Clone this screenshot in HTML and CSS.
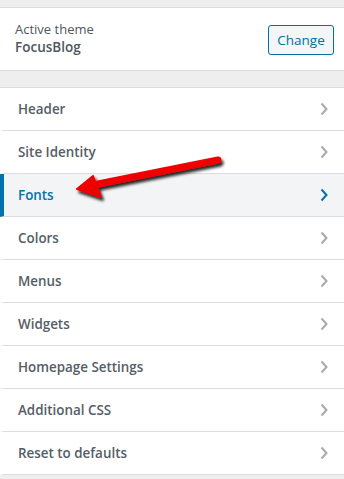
FILE: index.html
```html
<!DOCTYPE html>
<html lang="en">
<head>
    <meta charset="UTF-8">
    <meta name="viewport" content="width=device-width, initial-scale=1.0">
    <title>Customizer</title>
    <link rel="stylesheet" href="styles.css">
</head>
<body>
    <div class="panel">
        <div class="theme-box">
            <div class="theme-info">
                <span class="theme-label">Active theme</span>
                <span class="theme-name">FocusBlog</span>
            </div>
            <button class="change-btn">Change</button>
        </div>

        <ul class="sections">
            <li class="section">Header<svg class="chev" viewBox="0 0 8 14"><path d="M1.5 1.5 L6.5 7 L1.5 12.5"/></svg></li>
            <li class="section">Site Identity<svg class="chev" viewBox="0 0 8 14"><path d="M1.5 1.5 L6.5 7 L1.5 12.5"/></svg></li>
            <li class="section active">Fonts<svg class="chev" viewBox="0 0 8 14"><path d="M1.5 1.5 L6.5 7 L1.5 12.5"/></svg></li>
            <li class="section">Colors<svg class="chev" viewBox="0 0 8 14"><path d="M1.5 1.5 L6.5 7 L1.5 12.5"/></svg></li>
            <li class="section">Menus<svg class="chev" viewBox="0 0 8 14"><path d="M1.5 1.5 L6.5 7 L1.5 12.5"/></svg></li>
            <li class="section">Widgets<svg class="chev" viewBox="0 0 8 14"><path d="M1.5 1.5 L6.5 7 L1.5 12.5"/></svg></li>
            <li class="section">Homepage Settings<svg class="chev" viewBox="0 0 8 14"><path d="M1.5 1.5 L6.5 7 L1.5 12.5"/></svg></li>
            <li class="section">Additional CSS<svg class="chev" viewBox="0 0 8 14"><path d="M1.5 1.5 L6.5 7 L1.5 12.5"/></svg></li>
            <li class="section">Reset to defaults<svg class="chev" viewBox="0 0 8 14"><path d="M1.5 1.5 L6.5 7 L1.5 12.5"/></svg></li>
        </ul>

        <svg class="arrow" width="344" height="479" viewBox="0 0 344 479">
            <defs>
                <filter id="shadow" x="-20%" y="-50%" width="140%" height="200%">
                    <feGaussianBlur in="SourceAlpha" stdDeviation="1.6"/>
                    <feOffset dx="2" dy="3" result="blur"/>
                    <feComponentTransfer><feFuncA type="linear" slope="0.85"/></feComponentTransfer>
                    <feMerge><feMergeNode/><feMergeNode in="SourceGraphic"/></feMerge>
                </filter>
            </defs>
            <g filter="url(#shadow)">
                <line x1="218" y1="160" x2="98" y2="184" stroke="#ee0000" stroke-width="7" stroke-linecap="round"/>
                <polygon points="77,189 93,176 101,197" fill="#ee0000" stroke="#ee0000" stroke-width="2" stroke-linejoin="round"/>
            </g>
        </svg>
    </div>
</body>
</html>
```

FILE: styles.css
```css
* {
    box-sizing: border-box;
    margin: 0;
    padding: 0;
}

body {
    font-family: 'Open Sans', 'Noto Sans', sans-serif;
    background: #eeeeee;
    color: #50575e;
    width: 344px;
    height: 479px;
    overflow: hidden;
}

.panel {
    position: relative;
    padding-top: 7px;
}

.theme-box {
    display: flex;
    align-items: center;
    justify-content: space-between;
    background: #fff;
    border-top: 1px solid #dcdcde;
    border-bottom: 1px solid #dcdcde;
    height: 64px;
    padding: 0 10px 0 15px;
    margin-bottom: 16px;
}

.theme-info {
    display: flex;
    flex-direction: column;
    line-height: 18px;
    margin-top: -2px;
}

.theme-label {
    font-size: 13px;
    color: #50575e;
}

.theme-name {
    font-size: 13.5px;
    font-weight: 600;
    color: #50575e;
}

.change-btn {
    font-family: inherit;
    font-size: 13.5px;
    color: #0071a1;
    background: #f3f5f6;
    border: 1px solid #0071a1;
    border-radius: 3px;
    width: 66px;
    height: 30px;
    margin-top: 1px;
}

.sections {
    list-style: none;
    border-top: 1px solid #dcdcde;
}

.section {
    display: flex;
    align-items: center;
    justify-content: space-between;
    height: 43px;
    padding: 0 16px 0 14px;
    background: #fff;
    border-bottom: 1px solid #dcdcde;
    border-left: 4px solid transparent;
    font-size: 13.4px;
    font-weight: 600;
    color: #555d66;
}

.section.active {
    background: #f3f4f5;
    color: #0073aa;
    border-left-color: #0073aa;
}

.chev {
    width: 8px;
    height: 14px;
    fill: none;
    stroke: #a7aaad;
    stroke-width: 2;
}

.section.active .chev {
    stroke: #0073aa;
}

.arrow {
    position: absolute;
    left: 0;
    top: 0;
    pointer-events: none;
}
```
